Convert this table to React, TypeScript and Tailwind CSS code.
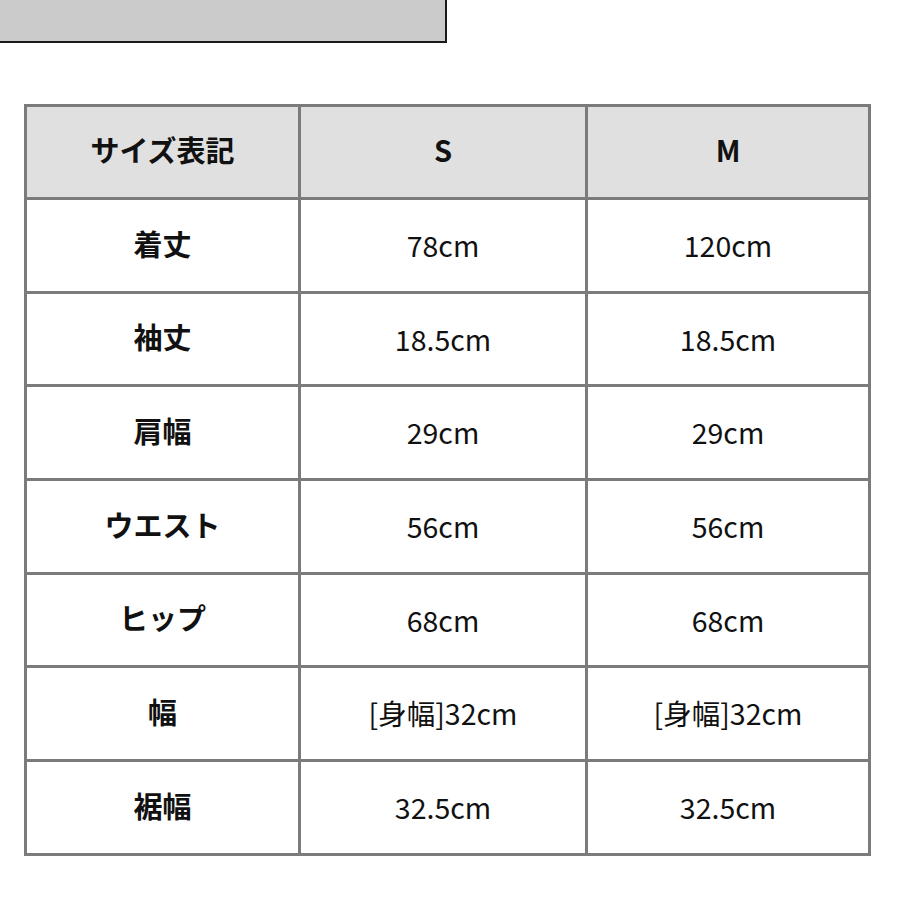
const rows: [string, string, string][] = [
  ["着丈", "78cm", "120cm"],
  ["袖丈", "18.5cm", "18.5cm"],
  ["肩幅", "29cm", "29cm"],
  ["ウエスト", "56cm", "56cm"],
  ["ヒップ", "68cm", "68cm"],
  ["幅", "[身幅]32cm", "[身幅]32cm"],
  ["裾幅", "32.5cm", "32.5cm"],
];

export default function App() {
  return (
    <div
      className="w-[900px] h-[900px] bg-white text-[#111] overflow-hidden"
      style={{ fontFamily: '"Noto Sans CJK JP", "Noto Sans", sans-serif' }}
    >
      {/* top banner remnant */}
      <div className="w-[447px] h-[43px] bg-[#cccbcc] border-r-2 border-b-2 border-[#1a1a1a]" />

      {/* size table */}
      <div className="mt-[61px] ml-[24px] w-[847px] grid grid-cols-[271px_284px_280px] gap-[3px] p-[3px] bg-[#7b7b7b]">
        <div className="h-[90px] pb-[4px] bg-[#e1e0e1] flex items-center justify-center text-[29px] font-bold">サイズ表記</div>
        <div className="h-[90px] pb-[4px] bg-[#e1e0e1] flex items-center justify-center text-[29px] font-bold">S</div>
        <div className="h-[90px] pb-[4px] bg-[#e1e0e1] flex items-center justify-center text-[29px] font-bold">M</div>
        {rows.map(([label, s, m]) => (
          <div key={label} className="contents">
            <div className="h-[90.7px] pb-[4px] bg-white flex items-center justify-center text-[29px] font-bold">{label}</div>
            <div className="h-[90.7px] bg-white flex items-center justify-center text-[28.5px]">{s}</div>
            <div className="h-[90.7px] bg-white flex items-center justify-center text-[28.5px]">{m}</div>
          </div>
        ))}
      </div>
    </div>
  );
}
